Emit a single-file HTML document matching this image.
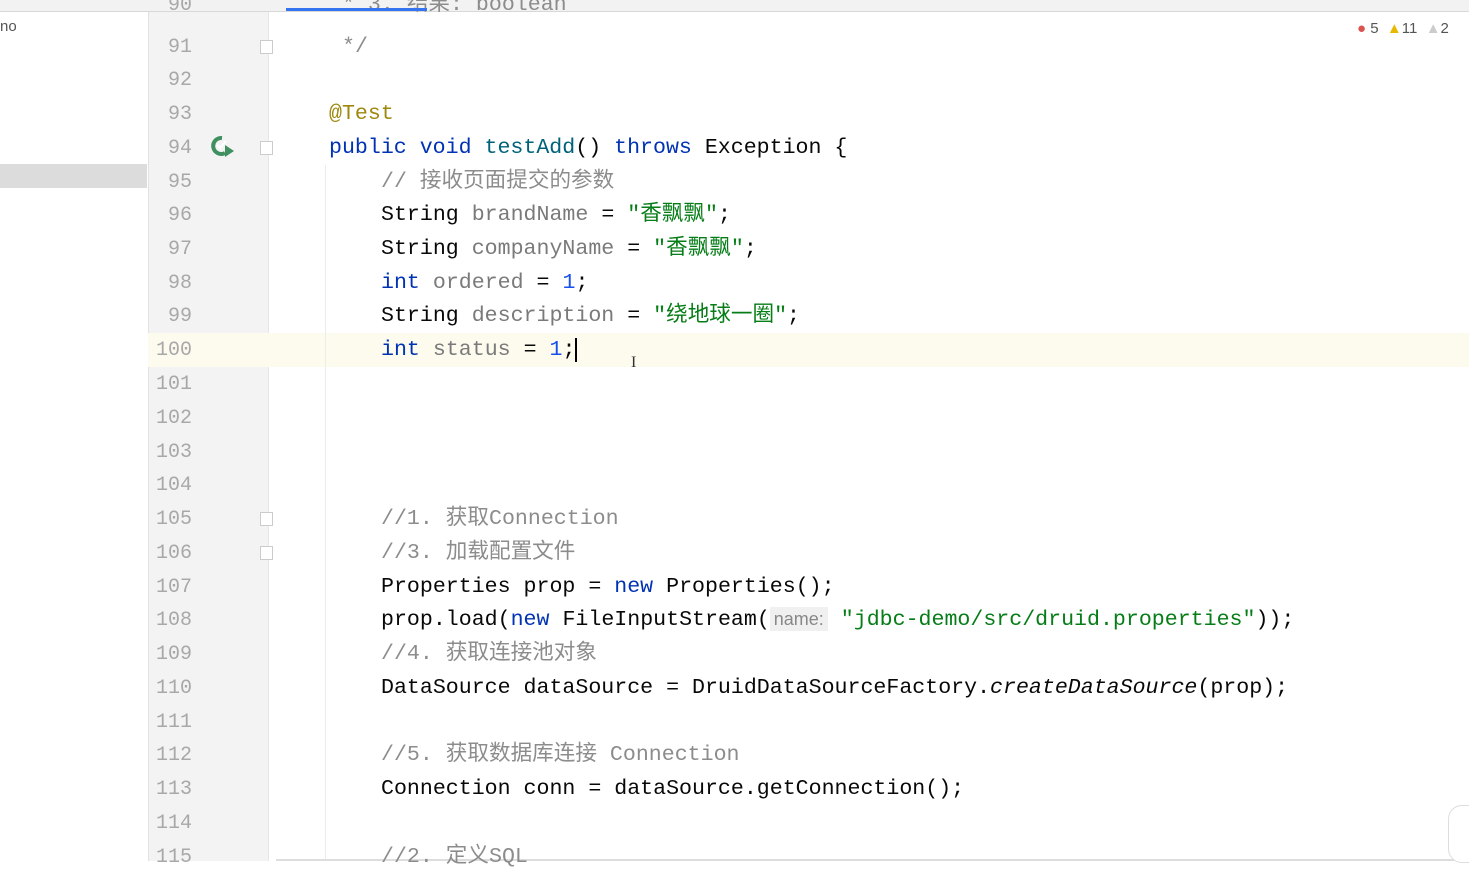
<!DOCTYPE html><html><head><meta charset="utf-8"><style>
body{margin:0;width:1469px;height:861px;overflow:hidden;background:#fff;position:relative;font-family:"Liberation Mono","Noto Sans CJK SC",monospace;}
.l{position:absolute;height:34px;line-height:34px;font-size:21.6px;white-space:pre;color:#080808}
.n{position:absolute;left:140px;width:52px;text-align:right;font-size:20px;color:#a8a8a8;height:34px;line-height:36px;font-family:"Liberation Mono",monospace}
.k{color:#0033b3}.v{color:#7a7a7a}.s{color:#067d17}.c{color:#8c8c8c}.num{color:#1750eb}.a{color:#9e880d}
.z{letter-spacing:0}
.fold{position:absolute;left:260px;width:13px;height:14px;border:1px solid #ccc;background:#fff;box-sizing:border-box}
</style></head><body>
<div style="position:absolute;left:0;top:0;width:1469px;height:11px;background:#f2f2f2;border-bottom:1px solid #d8d8d8"></div>
<div style="position:absolute;left:0;top:12px;width:148px;height:849px;background:#fff"></div>
<div style="position:absolute;left:0;top:18px;font:15px 'Liberation Sans',sans-serif;color:#555">no</div>
<div style="position:absolute;left:0;top:164px;width:147px;height:24px;background:#dcdcdc"></div>
<div style="position:absolute;left:148px;top:12px;width:119px;height:849px;background:#f3f3f3;border-left:1px solid #e2e2e2;border-right:1px solid #e6e6e6"></div>
<div style="position:absolute;left:148px;top:333px;width:1321px;height:34px;background:#fdfbee"></div>
<div style="position:absolute;left:325px;top:165px;width:1px;height:696px;background:#ececec"></div>
<div style="position:absolute;left:276px;top:859px;width:1186px;height:2px;background:#ddd"></div>
<div style="position:absolute;left:1357px;top:20px;font:15px 'Liberation Sans',sans-serif;color:#555;white-space:pre"><span style="color:#d9534f">●</span> 5  <span style="color:#e8b900">▲</span>11  <span style="color:#ccc">▲</span>2</div>
<div class="fold" style="top:40px"></div><div class="fold" style="top:141px"></div><div class="fold" style="top:512px"></div><div class="fold" style="top:546px"></div>
<svg style="position:absolute;left:211px;top:135px" width="24" height="24" viewBox="0 0 24 24"><path d="M11 3a8 8 0 1 0 3 15" fill="none" stroke="#3f8f5f" stroke-width="4"/><path d="M6 10l3 3 6-7" fill="none" stroke="#fff" stroke-width="2"/><path d="M14 10l9 6-9 6z" fill="#3f8f5f"/></svg>
<div class="n" style="top:-12px">90</div><div class="l c" style="left:342px;top:-12px">* 3. 结果: boolean</div>
<div style="position:absolute;left:286px;top:8px;width:141px;height:3px;background:#3574f0"></div>
<div class="n" style="top:30px">91</div><div class="l c" style="left:342px;top:30px">*/</div>
<div class="n" style="top:63px">92</div>
<div class="n" style="top:97px">93</div><div class="l a" style="left:329px;top:97px">@Test</div>
<div class="n" style="top:131px">94</div><div class="l" style="left:329px;top:131px"><span class="k">public void</span> <span style="color:#00627a">testAdd</span>() <span class="k">throws</span> Exception {</div>
<div class="n" style="top:165px">95</div><div class="l c" style="left:381px;top:165px">// 接收页面提交的参数</div>
<div class="n" style="top:198px">96</div><div class="l" style="left:381px;top:198px">String <span class="v">brandName</span> = <span class="s">"香飘飘"</span>;</div>
<div class="n" style="top:232px">97</div><div class="l" style="left:381px;top:232px">String <span class="v">companyName</span> = <span class="s">"香飘飘"</span>;</div>
<div class="n" style="top:266px">98</div><div class="l" style="left:381px;top:266px"><span class="k">int</span> <span class="v">ordered</span> = <span class="num">1</span>;</div>
<div class="n" style="top:299px">99</div><div class="l" style="left:381px;top:299px">String <span class="v">description</span> = <span class="s">"绕地球一圈"</span>;</div>
<div class="n" style="top:333px">100</div><div class="l" style="left:381px;top:333px"><span class="k">int</span> <span class="v">status</span> = <span class="num">1</span>;<span style="border-left:2px solid #000"></span></div>
<div style="position:absolute;left:631px;top:354px;font:16px 'Liberation Serif',serif;color:#333">I</div>
<div class="n" style="top:367px">101</div><div class="n" style="top:401px">102</div><div class="n" style="top:435px">103</div><div class="n" style="top:468px">104</div>
<div class="n" style="top:502px">105</div><div class="l c" style="left:381px;top:502px">//1. 获取Connection</div>
<div class="n" style="top:536px">106</div><div class="l c" style="left:381px;top:536px">//3. 加载配置文件</div>
<div class="n" style="top:570px">107</div><div class="l" style="left:381px;top:570px">Properties prop = <span class="k">new</span> Properties();</div>
<div class="n" style="top:603px">108</div><div class="l" style="left:381px;top:603px">prop.load(<span class="k">new</span> FileInputStream(<span style="background:#f0f0f0;color:#888;font:18px 'Liberation Sans',sans-serif;padding:2px 4px">name:</span> <span class="s">"jdbc-demo/src/druid.properties"</span>));</div>
<div class="n" style="top:637px">109</div><div class="l c" style="left:381px;top:637px">//4. 获取连接池对象</div>
<div class="n" style="top:671px">110</div><div class="l" style="left:381px;top:671px">DataSource dataSource = DruidDataSourceFactory.<i>createDataSource</i>(prop);</div>
<div class="n" style="top:705px">111</div>
<div class="n" style="top:738px">112</div><div class="l c" style="left:381px;top:738px">//5. 获取数据库连接 Connection</div>
<div class="n" style="top:772px">113</div><div class="l" style="left:381px;top:772px">Connection conn = dataSource.getConnection();</div>
<div class="n" style="top:806px">114</div>
<div class="n" style="top:840px">115</div><div class="l c" style="left:381px;top:840px">//2. 定义SQL</div>
<div style="position:absolute;left:1448px;top:805px;width:40px;height:56px;border:1px solid #ddd;border-radius:14px;background:#fff"></div>
</body></html>
